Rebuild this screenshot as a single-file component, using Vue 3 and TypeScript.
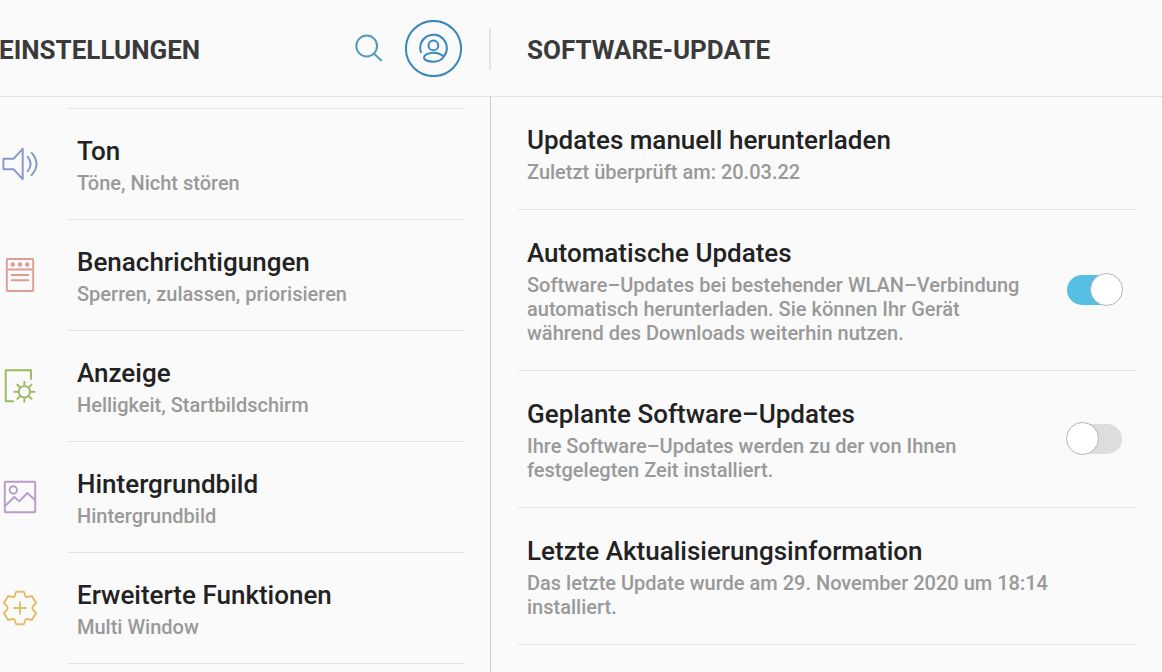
<script setup lang="ts">
import { ref } from 'vue'

type IconName = 'sound' | 'notifications' | 'display' | 'wallpaper' | 'advanced'

interface Category {
  icon: IconName
  title: string
  summary: string
}

interface Option {
  id: string
  title: string
  summary: string
  enabled?: boolean
}

const categories: Category[] = [
  { icon: 'sound', title: 'Ton', summary: 'Töne, Nicht stören' },
  { icon: 'notifications', title: 'Benachrichtigungen', summary: 'Sperren, zulassen, priorisieren' },
  { icon: 'display', title: 'Anzeige', summary: 'Helligkeit, Startbildschirm' },
  { icon: 'wallpaper', title: 'Hintergrundbild', summary: 'Hintergrundbild' },
  { icon: 'advanced', title: 'Erweiterte Funktionen', summary: 'Multi Window' },
]

const options = ref<Option[]>([
  { id: 'manual', title: 'Updates manuell herunterladen', summary: 'Zuletzt überprüft am: 20.03.22' },
  {
    id: 'auto',
    title: 'Automatische Updates',
    summary:
      'Software–Updates bei bestehender WLAN–Verbindung automatisch herunterladen. Sie können Ihr Gerät während des Downloads weiterhin nutzen.',
    enabled: true,
  },
  {
    id: 'scheduled',
    title: 'Geplante Software–Updates',
    summary: 'Ihre Software–Updates werden zu der von Ihnen festgelegten Zeit installiert.',
    enabled: false,
  },
  {
    id: 'last',
    title: 'Letzte Aktualisierungsinformation',
    summary: 'Das letzte Update wurde am 29. November 2020 um 18:14 installiert.',
  },
])

const rays = [0, 45, 90, 135, 180, 225, 270, 315]
</script>

<template>
  <div class="settings">
    <header class="bar bar-left">
      <h1 class="heading">EINSTELLUNGEN</h1>
      <div class="actions">
        <button class="icon-button search" type="button" aria-label="Suchen">
          <svg width="28" height="30" viewBox="0 0 28 30">
            <circle cx="11.7" cy="13" r="10.4" />
            <path d="M18.8 20.4 L26.8 28" />
          </svg>
        </button>
        <button class="icon-button account" type="button" aria-label="Konto">
          <svg width="57" height="57" viewBox="0 0 57 57">
            <circle cx="28.5" cy="28.5" r="27.6" />
            <path d="M16 33 A13.4 13.4 0 1 1 38.7 36.7" />
            <circle cx="28.4" cy="25.4" r="4.9" />
            <path d="M38.7 36.7 C36 34 32.5 32.7 28.3 32.7 C23 32.7 19 35 19 37.5 C19 40 23 41.7 28.3 41.7 C33 41.7 36.5 40 38.7 36.7 Z" />
          </svg>
        </button>
        <span class="separator"></span>
      </div>
    </header>
    <header class="bar bar-right">
      <h2 class="heading">SOFTWARE-UPDATE</h2>
    </header>

    <nav class="categories" aria-label="Einstellungen">
      <a v-for="item in categories" :key="item.icon" class="category" href="#">
        <svg class="glyph" :class="item.icon" width="40" height="40" viewBox="0 0 40 40" aria-hidden="true">
          <template v-if="item.icon === 'sound'">
            <path d="M3.4 14.8 H13.4 L22.7 4.8 V35.2 L13.4 25.2 H3.4 Z" />
            <path d="M27.2 12.2 Q34 20 27.2 27.8 M31 8.2 Q42 20 31 31.8" />
          </template>
          <template v-else-if="item.icon === 'notifications'">
            <rect x="6.8" y="4" width="26.4" height="32" rx="1" />
            <path d="M6.8 14.5 H33.2 M11 20 H29 M11 25.2 H29" />
            <circle class="dot" cx="12.8" cy="9.5" r="2.2" />
            <circle class="dot" cx="20" cy="9.5" r="2.2" />
            <circle class="dot" cx="27.2" cy="9.5" r="2.2" />
          </template>
          <template v-else-if="item.icon === 'display'">
            <path d="M31 13.8 V4.2 H5.7 V35.2 H13.8" />
            <circle cx="24.4" cy="25.8" r="5.7" />
            <path v-for="angle in rays" :key="angle" d="M24.4 19.4 V15" :transform="`rotate(${angle} 24.4 25.8)`" />
          </template>
          <template v-else-if="item.icon === 'wallpaper'">
            <rect x="4.8" y="4.8" width="30.4" height="30.4" rx="1" />
            <circle cx="13.3" cy="13" r="3.7" />
            <path d="M4.8 29.2 L14.3 20 L19.3 24.4 L27.3 16 L35.2 23.4" />
          </template>
          <template v-else>
            <path
              d="M16 3.7 H24 L25.2 7.8 Q25.8 9.4 27.4 9 L31.8 8 L36.2 15 L33 18.2 Q31.8 20 33 21.8 L36.2 25 L31.8 32 L27.4 31 Q25.8 30.6 25.2 32.2 L24 36.3 H16 L14.8 32.2 Q14.2 30.6 12.6 31 L8.2 32 L3.8 25 L7 21.8 Q8.2 20 7 18.2 L3.8 15 L8.2 8 L12.6 9 Q14.2 9.4 14.8 7.8 Z"
            />
            <path d="M13.6 20 H26.4 M20 13.6 V26.4" />
          </template>
        </svg>
        <span class="category-text">
          <span class="title">{{ item.title }}</span>
          <span class="summary">{{ item.summary }}</span>
        </span>
      </a>
    </nav>

    <main class="options">
      <template v-for="option in options" :key="option.id">
        <label v-if="option.enabled !== undefined" class="option" :for="option.id">
          <span class="option-text">
            <span class="title">{{ option.title }}</span>
            <span class="summary">{{ option.summary }}</span>
          </span>
          <input :id="option.id" v-model="option.enabled" class="switch" type="checkbox" role="switch" />
        </label>
        <button v-else class="option" type="button">
          <span class="option-text">
            <span class="title">{{ option.title }}</span>
            <span class="summary">{{ option.summary }}</span>
          </span>
        </button>
      </template>
    </main>
  </div>
</template>

<style>
body {
  margin: 0;
  background: #fafafa;
}
</style>

<style scoped>
.settings {
  display: grid;
  grid-template-columns: 491fr 671fr;
  grid-template-rows: auto 1fr;
  min-height: 100vh;
  background: #fafafa;
  font-family: Roboto, "Noto Sans", sans-serif;
  font-weight: 500;
}

.bar {
  display: flex;
  align-items: center;
  box-sizing: border-box;
  height: 97px;
  border-bottom: 1px solid #e3e3e3;
}

.bar-left {
  justify-content: space-between;
}

.bar-right {
  padding-left: 36px;
}

.heading {
  margin: 0;
  padding-top: 4px;
  font-size: 26px;
  line-height: 32px;
  font-weight: 700;
  color: #3a3a3a;
}

.bar-left .heading {
  margin-left: -1px;
}

.actions {
  display: flex;
  align-items: center;
}

.icon-button {
  display: block;
  padding: 0;
  border: 0;
  background: none;
  cursor: pointer;
}

svg {
  display: block;
  fill: none;
  stroke-width: 2;
}

.search {
  margin-right: 22px;
  stroke: #4f9bb8;
}

.account {
  margin-right: 27px;
  stroke: #3a87bb;
}

.separator {
  width: 2px;
  height: 42px;
  margin-top: 2px;
  background: #e3e3e3;
}

.categories {
  padding-top: 11px;
  border-right: 1px solid #cacaca;
}

.categories::before {
  content: "";
  display: block;
  height: 1px;
  margin: 0 26px 0 68px;
  background: #e3e3e3;
}

.category {
  display: flex;
  align-items: center;
  color: inherit;
  text-decoration: none;
}

.glyph {
  flex: none;
  margin: 0 28px 1px 0;
  stroke-width: 1.9;
  stroke-linejoin: round;
}

.sound { stroke: #8496cc; }
.notifications { stroke: #dd9d94; }
.display { stroke: #9aba5e; }
.wallpaper { stroke: #b99acb; }
.advanced { stroke: #e2bd68; }

.dot {
  fill: #dd9d94;
  stroke: none;
}

.category-text {
  flex: 1;
  margin-right: 26px;
  padding: 26px 9px 24px;
  border-bottom: 1px solid #e3e3e3;
}

.title,
.summary {
  display: block;
}

.title {
  margin-bottom: 4px;
  font-size: 26px;
  line-height: 32px;
  color: #222222;
}

.summary {
  font-size: 20px;
  line-height: 24px;
  color: #999999;
}

.options {
  padding: 0 26px 0 27px;
}

.option {
  display: flex;
  align-items: center;
  gap: 30px;
  box-sizing: border-box;
  width: 100%;
  padding: 0 13px 0 9px;
  border: 0;
  border-bottom: 1px solid #e3e3e3;
  background: none;
  font: inherit;
  text-align: left;
  cursor: pointer;
}

.option-text {
  flex: 1;
  padding: 27px 0 25px;
}

.switch {
  appearance: none;
  position: relative;
  flex: none;
  width: 57px;
  height: 33px;
  margin: 0 0 1px;
  cursor: pointer;
}

.switch::before {
  content: "";
  position: absolute;
  inset: 2px 1px 1px;
  border-radius: 15px;
  background: #dddddd;
}

.switch::after {
  content: "";
  position: absolute;
  top: 0;
  left: 0;
  box-sizing: border-box;
  width: 33px;
  height: 33px;
  border: 1px solid #b5b5b5;
  border-radius: 50%;
  background: #ffffff;
}

.switch:checked::before {
  background: #56c0e4;
}

.switch:checked::after {
  right: 0;
  left: auto;
}
</style>
